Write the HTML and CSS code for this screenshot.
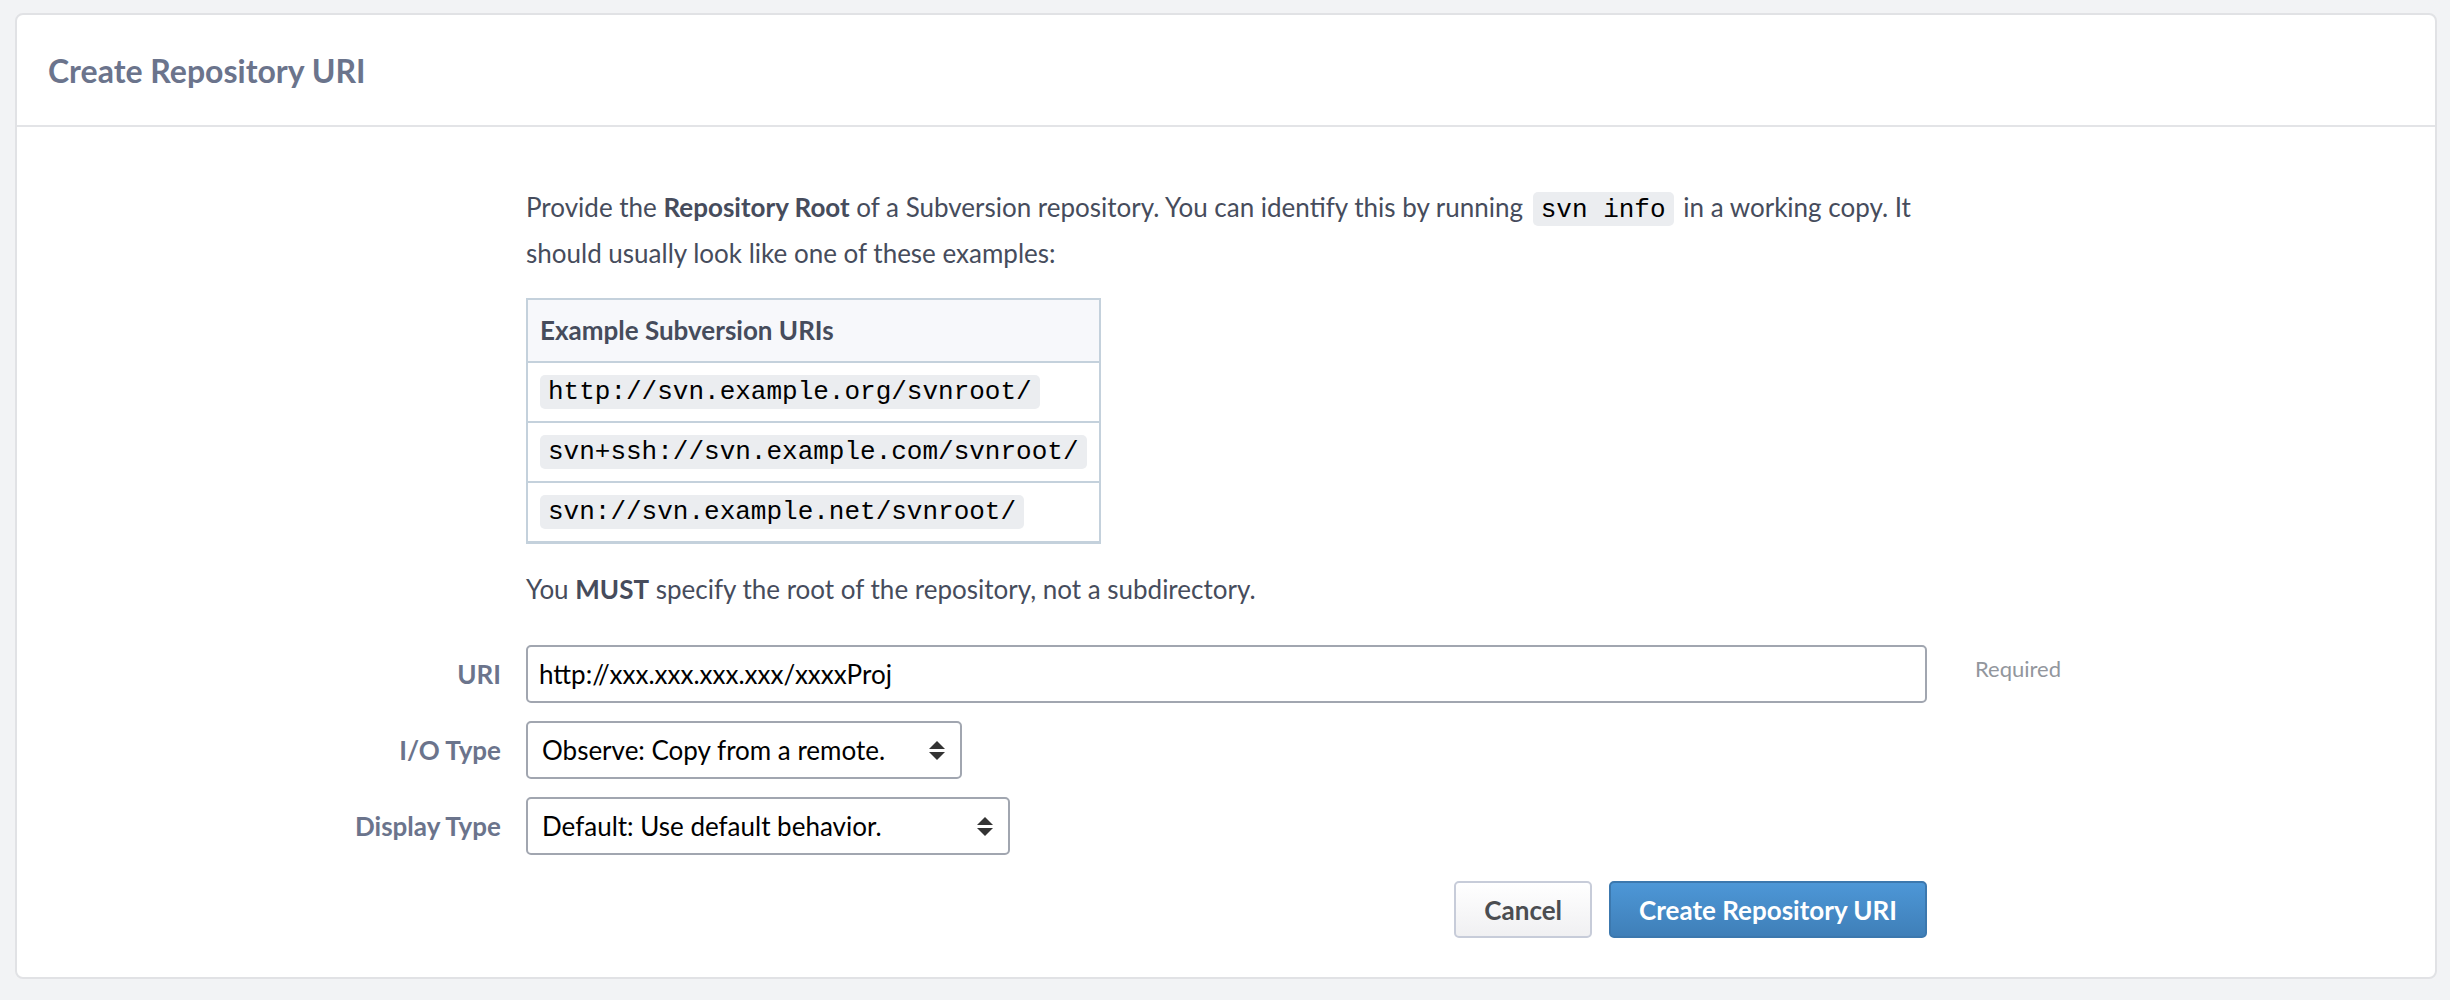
FILE: index.html
```html
<!DOCTYPE html>
<html lang="en">
<head>
<meta charset="utf-8">
<title>Create Repository URI</title>
<link rel="stylesheet" href="styles.css">
</head>
<body>
<div class="page">
  <div class="box">
    <div class="box-header">
      <h1 class="title">Create Repository URI</h1>
    </div>
    <div class="box-body">
      <div class="row">
        <div class="label"></div>
        <div class="control instructions">
          <p><span>Provide the <b>Repository Root</b> of a Subversion repository. You can identify this by running <tt class="mono inline">svn info</tt> in a working copy. It</span> <span>should usually look like one of these examples:</span></p>
          <table class="examples">
            <thead>
              <tr><th>Example Subversion URIs</th></tr>
            </thead>
            <tbody>
              <tr><td><tt class="mono pill">http://svn.example.org/svnroot/</tt></td></tr>
              <tr><td><tt class="mono pill">svn+ssh://svn.example.com/svnroot/</tt></td></tr>
              <tr><td><tt class="mono pill">svn://svn.example.net/svnroot/</tt></td></tr>
            </tbody>
          </table>
          <p>You <b>MUST</b> specify the root of the repository, not a subdirectory.</p>
        </div>
      </div>

      <div class="row field first">
        <label class="label" for="uri">URI</label>
        <div class="control">
          <input class="input" id="uri" type="text" value="http://xxx.xxx.xxx.xxx/xxxxProj">
        </div>
        <div class="caption">Required</div>
      </div>

      <div class="row field">
        <div class="label">I/O Type</div>
        <div class="control">
          <div class="select select-io">
            <span>Observe: Copy from a remote.</span>
            <svg class="arrows" width="16" height="19" viewBox="0 0 16 19"><path d="M0 8 L8 0 L16 8 Z M0 11 L16 11 L8 19 Z"/></svg>
          </div>
        </div>
      </div>

      <div class="row field">
        <div class="label">Display Type</div>
        <div class="control">
          <div class="select select-display">
            <span>Default: Use default behavior.</span>
            <svg class="arrows" width="16" height="19" viewBox="0 0 16 19"><path d="M0 8 L8 0 L16 8 Z M0 11 L16 11 L8 19 Z"/></svg>
          </div>
        </div>
      </div>

      <div class="row actions-row">
        <div class="label"></div>
        <div class="control actions">
          <button class="btn btn-grey" type="button">Cancel</button>
          <button class="btn btn-blue" type="button">Create Repository URI</button>
        </div>
      </div>
    </div>
  </div>
</div>
</body>
</html>
```

FILE: styles.css
```css
html, body {
  margin: 0;
  padding: 0;
}

body {
  background: #f2f3f5;
  font-family: Lato, "Noto Sans", "Liberation Sans", sans-serif;
  color: #464c5c;
}

.page {
  padding: 13px 13px 22px 15px;
}

.box {
  background: #ffffff;
  border: 2px solid #e1e2e5;
  border-radius: 8px;
}

.box-header {
  height: 110px;
  border-bottom: 2px solid #e3e4e7;
  display: flex;
  align-items: center;
  padding-left: 31px;
}

.title {
  margin: 0;
  font-size: 32px;
  font-weight: 700;
  color: #6b748c;
}

.box-body {
  padding: 57px 0 39px;
}

.row {
  display: flex;
  align-items: center;
}

.label {
  width: 484px;
  flex: none;
  margin-right: 25px;
  text-align: right;
  font-size: 26px;
  font-weight: 700;
  color: #6b748c;
}

.control {
  width: 1401px;
  flex: none;
}

.caption {
  margin-left: 48px;
  padding-bottom: 12px;
  font-size: 22px;
  color: #92969d;
}

.instructions p {
  margin: 0;
  font-size: 26px;
  line-height: 46px;
  color: #464c5c;
}

.instructions b {
  font-weight: 700;
}

.mono {
  font-family: "Liberation Mono", "DejaVu Sans Mono", monospace;
  font-size: 26px;
  line-height: 30px;
  background: #ebedf0;
  border-radius: 5px;
  color: #000000;
}

.inline {
  padding: 3px 8px 1px;
  margin: 0 3px;
}

.examples {
  margin: 22px 0 22px;
  border-spacing: 0;
  border: 2px solid #c4d1dc;
  border-bottom-width: 3px;
}

.examples th {
  padding: 16px 12px 17px;
  line-height: 28px;
  font-size: 26px;
  font-weight: 700;
  text-align: left;
  color: #464c5c;
  background: #f7f8fb;
  border-bottom: 2px solid #c4d1dc;
}

.examples td {
  padding: 12px;
  border-bottom: 2px solid #c4d1dc;
}

.examples tr:last-child td {
  border-bottom: none;
}

.pill {
  display: block;
  width: fit-content;
  padding: 2px 8px;
}

.field {
  margin-top: 18px;
}

.field.first {
  margin-top: 33px;
}

.input {
  box-sizing: border-box;
  display: block;
  width: 100%;
  height: 58px;
  margin: 0;
  padding: 0 11px;
  border: 2px solid #a1a6b0;
  border-radius: 5px;
  font-family: Lato, "Noto Sans", sans-serif;
  font-size: 26px;
  color: #000000;
  background: #ffffff;
  outline: none;
}

.select {
  box-sizing: border-box;
  display: flex;
  align-items: center;
  justify-content: space-between;
  height: 58px;
  padding: 0 15px 0 14px;
  border: 2px solid #a1a6b0;
  border-radius: 5px;
  font-size: 26px;
  color: #000000;
  background: #ffffff;
}

.select-io {
  width: 436px;
}

.select-display {
  width: 484px;
}

.arrows {
  flex: none;
  fill: #333333;
}

.actions-row {
  margin-top: 26px;
}

.actions {
  display: flex;
  justify-content: flex-end;
  gap: 17px;
}

.btn {
  box-sizing: border-box;
  height: 57px;
  padding: 0 28px;
  border-radius: 5px;
  font-family: Lato, "Noto Sans", sans-serif;
  font-size: 26px;
  font-weight: 700;
  cursor: pointer;
}

.btn-grey {
  background: linear-gradient(#ffffff, #f0f0f2);
  border: 2px solid #c7ccd9;
  color: #4b4d51;
}

.btn-blue {
  background: linear-gradient(#4d97d7, #3f7fb8);
  border: 2px solid #3c78ae;
  color: #ffffff;
}
```
